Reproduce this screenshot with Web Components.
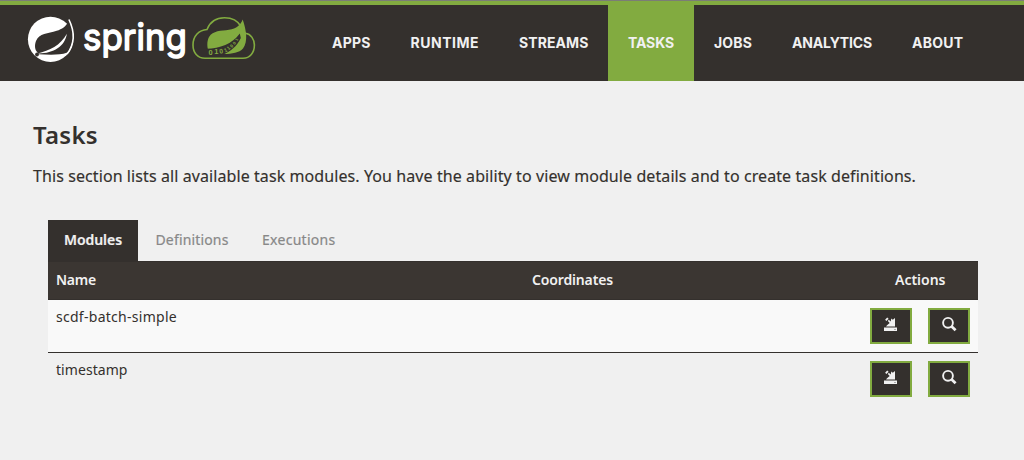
<!DOCTYPE html>
<html lang="en">
<head>
<meta charset="utf-8">
<title>Tasks</title>
<style>
html,body{margin:0;height:100%;background:#f0f0f0;color:#34302d;font-family:"Noto Sans",sans-serif}
</style>
</head>
<body>
<task-page></task-page>
<script>
function define(name, html, setup) {
  const template = document.createElement('template');
  template.innerHTML = html;
  customElements.define(name, class extends HTMLElement {
    connectedCallback() {
      if (this.shadowRoot) return;
      this.attachShadow({mode: 'open'}).append(template.content.cloneNode(true));
      if (setup) setup(this);
    }
  });
}

/* Inline text tracked so that it fills the width given in its attribute. */
define('tracked-text', `<style>:host{display:inline-block;white-space:nowrap}span{display:inline-block}</style><span><slot></slot></span>`, el => {
  const w = +el.getAttribute('width');
  const s = el.shadowRoot.querySelector('span');
  s.style.letterSpacing = (w - s.getBoundingClientRect().width) / el.textContent.length + 'px';
  el.style.width = w + 'px';
});

define('spring-logo', `<style>:host{display:block;width:232px;height:50px}svg{display:block}</style>
<svg width="232" height="50" viewBox="26 14 232 50">
  <circle cx="50.5" cy="39.3" r="22.6" fill="#fff"/>
  <path d="M68.9 19.5C74.5 31 75.5 43 67 54" fill="#34302d" stroke="#fff" stroke-width="1.6"/>
  <path d="M68.4 21.5C66 26.5 62 29.2 56.7 30.8C48 33.4 39 33.5 36 41C34.2 45.6 35 50 37.3 52.3L38.5 54.3C48 54.7 60 55.3 66.7 52.8C72.5 45 73.3 33 68.4 21.5Z" fill="#34302d"/>
  <path d="M66.9 33.8C64.8 46.8 53 53.8 37.5 53.4C49.5 50.7 60.5 45.5 66.9 33.8Z" fill="#fff"/>
  <circle cx="37" cy="54.5" r="1.9" fill="#34302d"/>
  <text x="83" y="50" textLength="104" lengthAdjust="spacingAndGlyphs" font-family="Inter,sans-serif" font-size="37" font-weight="400" fill="#fff" stroke="#fff" stroke-width="1.5" stroke-linejoin="round">spring</text>
  <path d="M205 58.3C197.5 58.3 193 52.5 193 45C193 36 199 30 207 29.5C210 22 216 17.8 224.5 17.8C232 17.8 238 21.2 241 26.5C243.5 30.5 244 32.5 245.5 33.3C251 34 254.4 39.5 254.4 45C254.4 52.5 250 58.3 243 58.3Z" fill="none" stroke="#82ab40" stroke-width="1.6"/>
  <path d="M242.7 19.5C240.5 25 236.7 28.6 229 29.8C221 31 213 30.5 209 37C206.6 41.5 207 47.5 209 53C222 54.3 237 55.3 243 48.5C248.3 41.5 246.3 30 242.7 19.5Z" fill="#82ab40"/>
  <path d="M206.5 55.5V48.8C220 48.5 232 44 239.8 33.5L240.8 38C237 46.5 230.5 51.5 222.5 54.8Z" fill="#34302d"/>
  <g font-family="Liberation Sans,sans-serif" font-size="7.5" font-weight="700" fill="#82ab40">
    <text x="208.5" y="54.8">0</text><text x="214.3" y="54.3">1</text><text transform="translate(219.7 53.8) rotate(-10)" font-size="6.6">0</text><text transform="translate(225 52.4) rotate(-24)" font-size="5.6">1</text><text transform="translate(228.6 50.2) rotate(-38)" font-size="5">1</text><text transform="translate(231.7 48) rotate(-43)" font-size="4.6">0</text><text transform="translate(234.8 44.9) rotate(-52)" font-size="4.3">0</text><text transform="translate(237.3 41.3) rotate(-60)" font-size="4">1</text>
  </g>
</svg>`);

define('nav-item', `<style>
:host{display:flex;box-sizing:border-box;height:76px;align-items:center;padding:0 20px;color:#f1f1f1;font:700 14px/20px Inter,sans-serif}
:host([active]){background:#82ab40}</style><slot></slot>`);

define('site-header', `<style>
:host{display:flex;box-sizing:border-box;height:81px;background:#34302d;border-top:1px solid #7b7d76;box-shadow:inset 0 4px #82ab40;padding:4px 0 0 26px}
spring-logo{margin-top:9px}
nav{display:flex;margin-left:54px}</style>
<spring-logo></spring-logo>
<nav>
<nav-item><tracked-text width="38.5">APPS</tracked-text></nav-item>
<nav-item><tracked-text width="68.5">RUNTIME</tracked-text></nav-item>
<nav-item style="padding-right:19.5px"><tracked-text width="69.5">STREAMS</tracked-text></nav-item>
<nav-item active><tracked-text width="46">TASKS</tracked-text></nav-item>
<nav-item><tracked-text width="38">JOBS</tracked-text></nav-item>
<nav-item><tracked-text width="80">ANALYTICS</tracked-text></nav-item>
<nav-item><tracked-text width="51.5">ABOUT</tracked-text></nav-item>
</nav>`);

define('tab-item', `<style>
:host{display:block;box-sizing:border-box;height:41px;padding:10px 16px;color:#888;font-size:14px;line-height:20px;-webkit-text-stroke:.2px}
:host([active]){background:#34302d;color:#f1f1f1;font-weight:600}</style><slot></slot>`);

define('icon-button', `<style>
:host{display:block;box-sizing:border-box;width:42px;height:36px;border:2px solid #82ab40;background:#34302d}
svg{display:none}
:host([icon=launch]) .launch,:host([icon=search]) .search{display:block}</style>
<svg class="launch" width="38" height="32" viewBox="0 0 38 32"><path fill="#f1f1f1" d="M12 17.5H25V21H12ZM14 16.6H23V8L20.8 9.8L19.3 8.5L18.7 11.4L16.8 9.8L15.8 11L17.7 13L15 15.2ZM13.1 9.8L15.2 7.6L16.6 8.8L14.4 11.1Z"/><path fill="#aaa" d="M22 19h2v1h-2z"/></svg>
<svg class="search" width="38" height="32" viewBox="0 0 38 32"><g fill="none" stroke="#f1f1f1"><circle cx="18" cy="12.8" r="4.9" stroke-width="1.9"/><path d="M21.4 16.3L25.6 20.2" stroke-width="2.8"/></g></svg>`);

define('module-row', `<style>
:host{display:grid;grid-template-columns:1fr 108px;box-sizing:border-box;height:52px;padding:8px 8px 0;font-size:14px;line-height:17px}
:host([striped]){height:53px;background:#f9f9f9;border-bottom:1px solid #34302d}
.actions{display:flex;gap:16px;justify-content:flex-end}</style>
<slot></slot><div class="actions"><icon-button icon="launch"></icon-button><icon-button icon="search"></icon-button></div>`);

define('module-table', `<style>
:host{display:block}
header{display:grid;grid-template-columns:476px 1fr 100px;box-sizing:border-box;height:39px;padding:9px 0 0 8px;background:#3b3632;border-top:1px solid #34302d;border-bottom:1px solid #34302d;color:#f1f1f1;font-weight:600;font-size:14px;line-height:18px}
.actions{padding-left:17px}</style>
<header><div><tracked-text width="40">Name</tracked-text></div><div><tracked-text width="81">Coordinates</tracked-text></div><div class="actions"><tracked-text width="50.5">Actions</tracked-text></div></header>
<slot></slot>`);

define('task-page', `<style>
:host{display:block}
main{padding:39px 46px 0 33px}
h1{margin:0;font-size:24px;line-height:30px;font-weight:600}
p{margin:15px 0 0;font-size:16px;line-height:22px;-webkit-text-stroke:.15px}
section{margin:33px 0 0 15px}
.tabs{display:flex;gap:1.5px}</style>
<site-header></site-header>
<main>
<h1><tracked-text width="65">Tasks</tracked-text></h1>
<p><tracked-text width="883">This section lists all available task modules. You have the ability to view module details and to create task definitions.</tracked-text></p>
<section>
<div class="tabs"><tab-item active><tracked-text width="58">Modules</tracked-text></tab-item><tab-item><tracked-text width="73">Definitions</tracked-text></tab-item><tab-item><tracked-text width="73.5">Executions</tracked-text></tab-item></div>
<module-table>
<module-row striped><tracked-text width="121">scdf-batch-simple</tracked-text></module-row>
<module-row><tracked-text width="71.5">timestamp</tracked-text></module-row>
</module-table>
</section>
</main>`);
</script>
</body>
</html>
